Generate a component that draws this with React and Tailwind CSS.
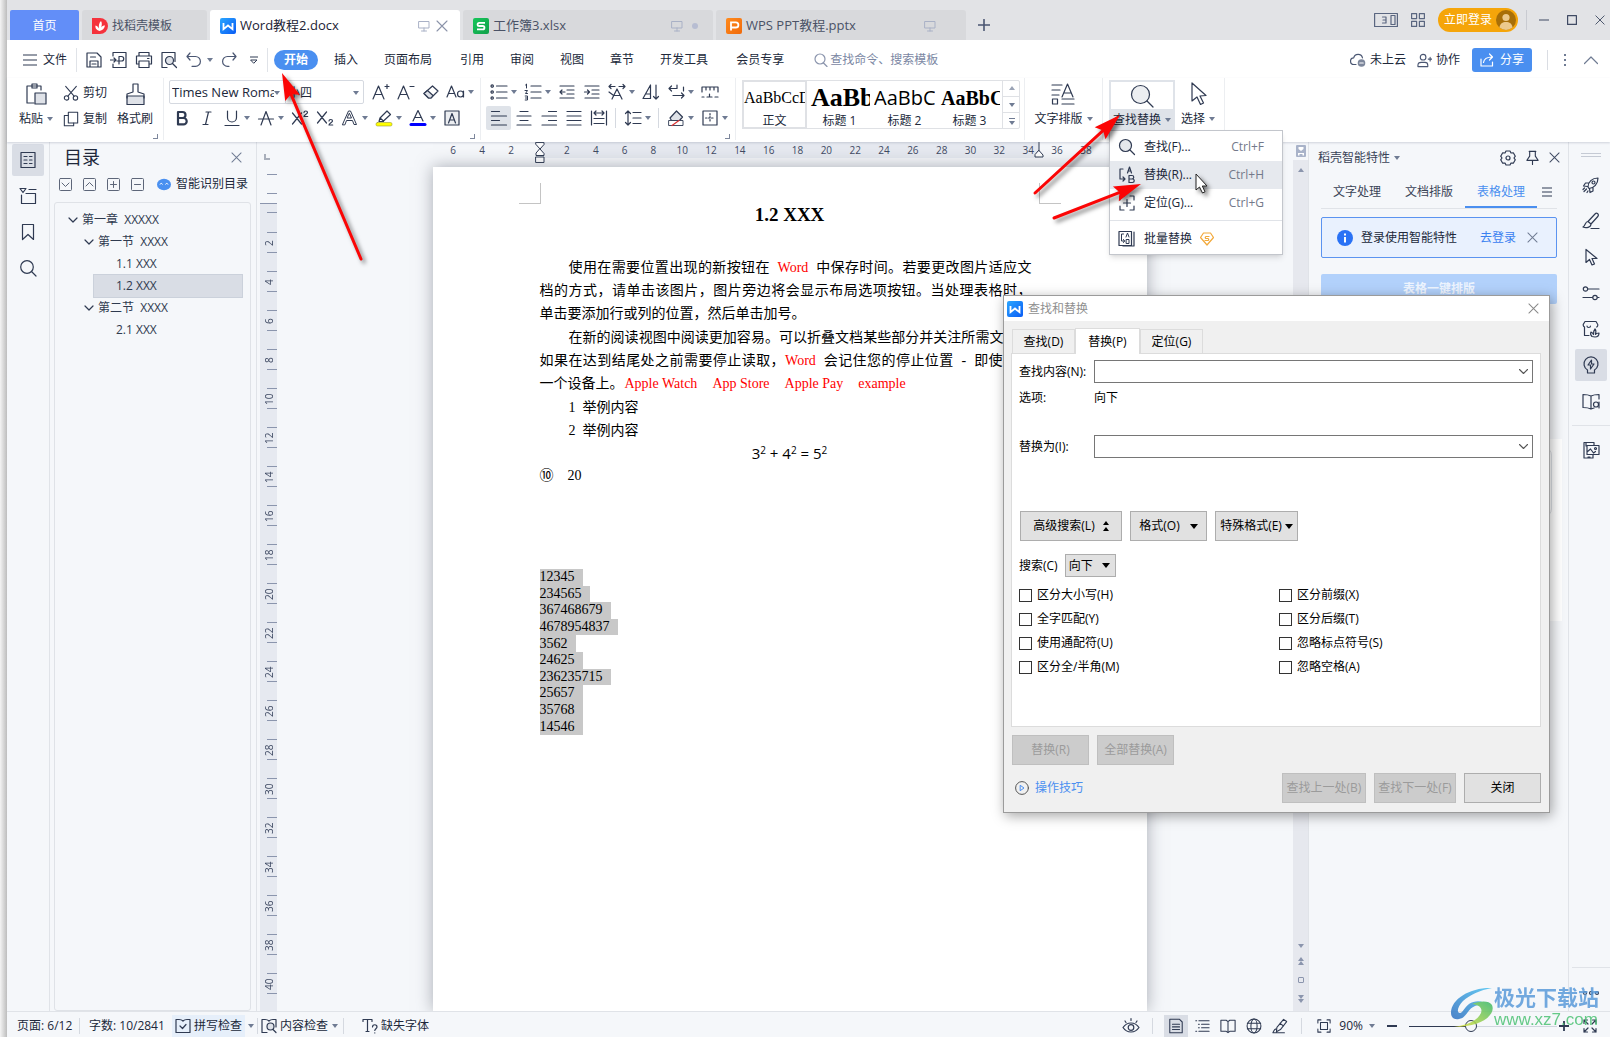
import React from "react";

const STROKE = "#2f3a52";

function Ic({ s = 18, box = 18, w = 1.2, c = STROKE, className = "", children }) {
  return (
    <svg
      width={s}
      height={s}
      viewBox={`0 0 ${box} ${box}`}
      fill="none"
      stroke={c}
      strokeWidth={w}
      strokeLinecap="round"
      strokeLinejoin="round"
      className={`shrink-0 ${className}`}
      aria-hidden="true"
    >
      {children}
    </svg>
  );
}

function Caret({ c = "#6f7b93", up = false }) {
  return (
    <svg width="6" height="4" viewBox="0 0 6 4" className="shrink-0" aria-hidden="true">
      <path d={up ? "M0 4h6L3 0z" : "M0 0h6L3 4z"} fill={c} />
    </svg>
  );
}

function Cross({ s = 12, c = "#6f7b93" }) {
  return (
    <Ic s={s} box={12} w={1.1} c={c}>
      <path d="M1 1l10 10M11 1L1 11" />
    </Ic>
  );
}

function AppLogo({ kind, id }) {
  const colors = {
    w: ["#2aa6ff", "#0a5cf5"],
    s: ["#17c65a", "#11a04a"],
    p: ["#ff8a1c", "#f06a0c"],
  }[kind];
  const d = {
    w: "M3.500 5v6.200L8 7.500l4.500 3.700V5",
    s: "M12 4.800H6.200a1.500 1.500 0 0 0 0 3.200h3.600a1.600 1.600 0 0 1 0 3.300H4",
    p: "M5 12.500V4.300h4.800a2.600 2.600 0 0 1 0 5.200H5",
  }[kind];
  return (
    <svg width="16" height="16" viewBox="0 0 16 16" className="shrink-0" aria-hidden="true">
      <defs>
        <linearGradient id={id} x1="0" y1="0" x2="1" y2="1">
          <stop offset="0" stopColor={colors[0]} />
          <stop offset="1" stopColor={colors[1]} />
        </linearGradient>
      </defs>
      <rect width="16" height="16" rx="2" fill={`url(#${id})`} />
      <path d={d} fill="none" stroke="#fff" strokeWidth="1.800" />
    </svg>
  );
}

function Monitor() {
  return (
    <Ic s={12} box={12} w={1} c="#a9b1c6">
      <path d="M1 1.500h10v6.500H1zM6 8v3M3.500 11h5" />
    </Ic>
  );
}

function FileTab({ kind, name, active, children }) {
  return (
    <div
      className={`flex h-[30px] w-[250px] items-center rounded-t-[3px] px-[10px] pt-[2px] text-[13px] ${
        active ? "bg-white text-[#1b2233]" : "bg-[#d8d9dc] text-[#4a5266]"
      }`}
    >
      <AppLogo kind={kind} id={`tab-${kind}`} />
      <span className="ml-1 flex-1 whitespace-nowrap">{name}</span>
      <Monitor />
      <span className="ml-1 flex w-4 justify-center">{children}</span>
    </div>
  );
}

function TitleBar() {
  return (
    <header className="flex h-10 shrink-0 items-end bg-[#e2e3e6] pl-[3px]">
      <nav className="flex items-end gap-[3px]">
        <button className="h-[30px] w-[69px] rounded-t-[2px] bg-[#628ef8] pt-[2px] text-xs text-white">首页</button>
        <div className="flex h-[30px] w-[125px] items-center rounded-t-[3px] bg-[#d8d9dc] pl-[10px] pt-[2px] text-xs text-[#4a5266]">
          <svg width="16" height="16" viewBox="0 0 16 16" aria-hidden="true">
            <path d="M0 0h8a8 8 0 0 1 0 16H0z" fill="#f5323c" />
            <path d="M7.500 13C4 12 3 9.500 3.500 7.500c2 .5 3 2 3.500 3C6.500 7.500 7 5 9 3c1.200 2 1 4.500 0 6.500 1-1.500 2.500-2 4-2-.5 3-2.500 5-5.500 5.500z" fill="#fff" />
          </svg>
          <span className="ml-1">找稻壳模板</span>
        </div>
        <FileTab kind="w" name="Word教程2.docx" active>
          <Cross c="#8b93a9" />
        </FileTab>
        <FileTab kind="s" name="工作簿3.xlsx">
          <span className="size-[6px] rounded-full bg-[#b7bdd2]" />
        </FileTab>
        <FileTab kind="p" name="WPS PPT教程.pptx" />
      </nav>
      <button aria-label="新建标签" className="flex h-[30px] w-9 items-center justify-center">
        <Ic s={12} box={12} w={1.6} c="#4a5672">
          <path d="M6 .5v11M.5 6h11" />
        </Ic>
      </button>
      <div className="flex-1" />
      <div className="flex h-10 items-center pr-[5px]">
        <Ic s={24} box={24} w={1.200} c="#5a6680">
          <path d="M.6 5.500h22.800v13H.6zM17 7.500h4v9h-4zM8.500 9h3.500v6H8.500M9 12h3" />
        </Ic>
        <Ic s={14} box={14} w={1.200} c="#5a6680" className="ml-[13px]">
          <path d="M.6.6h5v5h-5zM8.400.6h5v5h-5zM.6 8.400h5v5h-5zM8.400 8.400h5v5h-5z" />
        </Ic>
        <button className="ml-[13px] flex h-6 items-center gap-1 rounded-full bg-[#f5a50a] pl-[6px] pr-[2px] text-xs text-white">
          立即登录
          <svg width="20" height="20" viewBox="0 0 20 20" aria-hidden="true">
            <circle cx="10" cy="10" r="10" fill="#a86f08" />
            <circle cx="10" cy="7.500" r="3.600" fill="#ecc98c" />
            <path d="M3.500 17.500c.5-4 3-5.500 6.500-5.500s6 1.500 6.500 5.500a10 10 0 0 1-13 0z" fill="#ecc98c" />
          </svg>
        </button>
        <span className="ml-2 h-5 w-px bg-[#c9cbd1]" />
        <div className="ml-3 flex items-center gap-[18px]">
          <button aria-label="最小化">
            <Ic s={10} box={10} w={1.200} c="#3f4a63"><path d="M0 5h10" /></Ic>
          </button>
          <button aria-label="最大化">
            <Ic s={10} box={10} w={1.200} c="#3f4a63"><path d="M.6.6h8.800v8.800H.6z" /></Ic>
          </button>
          <button aria-label="关闭窗口"><Cross s={10} c="#3f4a63" /></button>
        </div>
      </div>
    </header>
  );
}

function MenuRow() {
  const tabs = ["插入", "页面布局", "引用", "审阅", "视图", "章节", "开发工具", "会员专享"];
  return (
    <div className="flex h-[38px] shrink-0 items-center bg-white pl-4 pt-[2px] text-xs text-[#20283a]">
      <button className="flex items-center gap-[6px]">
        <Ic s={14} box={14}><path d="M0 2h14M0 7h14M0 12h14" /></Ic>
        文件
      </button>
      <span className="ml-[9px] h-6 w-px bg-[#e0e3e8]" />
      <div className="ml-2 flex items-center gap-[7px]">
        <button aria-label="保存">
          <Ic><path d="M2 2h10l4 4v10H2zM5 16v-6h8v6M5.500 6h5M7 13h4" /></Ic>
        </button>
        <button aria-label="输出为PDF">
          <Ic><path d="M3 5V1.500h13v15H3V13M0 9h6M4 7l2 2-2 2M9 13V5.500h2.500a2 2 0 0 1 0 4.500H7" /></Ic>
        </button>
        <button aria-label="打印">
          <Ic><path d="M4 5V1.500h10V5M4 13H1.500V5h15v8H14M4 10h10v6.500H4zM12.500 7.500h1.500" /></Ic>
        </button>
        <button aria-label="打印预览">
          <Ic>
            <path d="M7 16.500H2v-15h13v9" />
            <circle cx="9.500" cy="9.500" r="4" fill="#dfe2e8" />
            <path d="M12.500 12.500l4 4" />
          </Ic>
        </button>
        <button aria-label="撤销" className="flex items-center gap-1">
          <Ic c="#4a5672"><path d="M5 2L2 5.500 5 9M2 5.500h8.500a4.800 4.800 0 0 1 0 9.800H7" /></Ic>
          <Caret />
        </button>
        <button aria-label="恢复">
          <Ic c="#4a5672"><path d="M13 2l3 3.500L13 9M16 5.500H7.500a4.800 4.800 0 0 0 0 9.800H9" /></Ic>
        </button>
        <button aria-label="自定义快速访问" className="flex w-[18px] justify-center">
          <Ic s={8} box={8} w={1}><path d="M0 1h8M1 4h6L4 7z" /></Ic>
        </button>
      </div>
      <span className="ml-1 h-6 w-px bg-[#e0e3e8]" />
      <button className="ml-[6px] h-5 w-11 rounded-full bg-[#4a8ff0] font-bold text-white">开始</button>
      <nav className="ml-4 flex gap-[26px]">
        {tabs.map((t) => (
          <button key={t} className={t.length > 2 ? "mr-[2px]" : ""}>{t}</button>
        ))}
      </nav>
      <label className="ml-7 flex items-center gap-[2px] text-[#7b87a3]">
        <Ic s={14} box={14} c="#8b95ad"><circle cx="6" cy="6" r="5" /><path d="M9.500 10l3.500 3.500" /></Ic>
        <input
          aria-label="查找命令、搜索模板"
          placeholder="查找命令、搜索模板"
          className="w-[130px] bg-transparent outline-none placeholder:text-[#7b87a3]"
        />
      </label>
      <div className="flex-1" />
      <div className="flex items-center pr-3">
        <button className="flex items-center gap-1">
          <Ic s={16} box={16} c="#4a5672">
            <path d="M6 12.500H4a3.300 3.300 0 0 1-.3-6.600A4.500 4.500 0 0 1 12.500 6" />
            <circle cx="11.500" cy="11" r="3.800" fill="#7d879c" stroke="none" />
            <path d="M9.800 11h3.400" stroke="#fff" />
          </Ic>
          未上云
        </button>
        <button className="ml-[11px] flex items-center gap-1">
          <Ic s={15} box={16} c="#4a5672">
            <circle cx="6.500" cy="4.500" r="3" />
            <path d="M1 14.500v-1.500c0-2 1.500-3 3.500-3h4c1.500 0 3 1 3 3v1.500zM12 6.500h4M14 4.500v4" />
          </Ic>
          协作
        </button>
        <button className="ml-3 flex h-6 w-[60px] items-center justify-center gap-[6px] rounded-[3px] bg-[#4a8ff0] text-white">
          <Ic s={14} box={14} c="#fff"><path d="M1 6v7h11.500V9M3.500 9.500C4 6 7 4 12 4M9.500 1L12.500 4 9.500 7" /></Ic>
          分享
        </button>
        <span className="ml-[15px] h-5 w-px bg-[#dadde3]" />
        <button aria-label="更多" className="ml-4 flex flex-col gap-[3px]">
          <i className="size-[2px] bg-[#6f7b93]" />
          <i className="size-[2px] bg-[#6f7b93]" />
          <i className="size-[2px] bg-[#6f7b93]" />
        </button>
        <button aria-label="折叠功能区" className="ml-[18px]">
          <Ic s={14} box={14} c="#6f7b93"><path d="M.5 10.500L7 4l6.500 6.500" /></Ic>
        </button>
      </div>
    </div>
  );
}

function Tool({ label, drop, active, children }) {
  return (
    <button
      aria-label={label}
      className={`flex h-6 items-center ${drop ? "w-[34px]" : "w-[25px] justify-center"} ${
        active ? "rounded-[2px] bg-[#dfe3e9]" : ""
      }`}
    >
      {drop ? (
        <>
          <span className="flex w-[25px] justify-center">{children}</span>
          <Caret />
        </>
      ) : (
        children
      )}
    </button>
  );
}

function Group({ className = "", corner, children }) {
  return (
    <section className={`relative h-[62px] shrink-0 border-r border-[#eceef1] pt-[2px] ${className}`}>
      {children}
      {corner && (
        <span className="absolute bottom-[1px] right-[5px] size-[5px] border-b border-r border-[#7d879c]" />
      )}
    </section>
  );
}

function FontGroup() {
  return (
    <Group className="flex w-[317px] flex-col gap-[2px] pl-[5px]" corner>
      <div className="flex h-6 items-center gap-1">
        <div className="flex h-6 w-[195px] rounded-[2px] border border-[#d5d9e0] pt-[2px] text-[13px] text-[#20283a]">
          <div className="flex w-[116px] items-center border-r border-[#d5d9e0] pl-[2px] pr-1">
            <select aria-label="字体" defaultValue="t" className="w-[102px] appearance-none overflow-hidden bg-transparent outline-none">
              <option value="t">Times New Roman</option>
            </select>
            <Caret />
          </div>
          <div className="flex flex-1 items-center pl-[2px] pr-1 text-xs">
            <select aria-label="字号" defaultValue="x" className="flex-1 appearance-none bg-transparent outline-none">
              <option value="x">小四</option>
            </select>
            <Caret />
          </div>
        </div>
        <div className="flex">
          <Tool label="增大字号"><Ic><path d="M1 16L6.500 3 12 16M3 11.500h7M13 3.500h4M15 1.500v4" /></Ic></Tool>
          <Tool label="减小字号"><Ic><path d="M1 16L6.500 3 12 16M3 11.500h7M13 3.500h4" /></Ic></Tool>
          <Tool label="清除格式">
            <Ic><path d="M10.500 3l5.500 5-7 7H6.500L2 10.500z" /><path d="M5.500 7.500l5.500 5-2 2.500H6.500L2 10.500z" fill="#dfe2e8" /></Ic>
          </Tool>
          <Tool label="更改大小写" drop>
            <Ic s={20} box={20}><path d="M1 15L5.500 4 10 15M2.500 11.500h6" /><circle cx="14.500" cy="12" r="3" /><path d="M17.500 9v6" /></Ic>
          </Tool>
        </div>
      </div>
      <div className="flex">
        <Tool label="加粗"><Ic w={2.200}><path d="M5 3h4.500a3 3 0 0 1 0 6H5zM5 9h5.500a3.200 3.200 0 0 1 0 6.400H5z" /></Ic></Tool>
        <Tool label="倾斜"><Ic><path d="M8 3h5M5 15.500h5M10.500 3L7.500 15.500" /></Ic></Tool>
        <Tool label="下划线" drop><Ic><path d="M4.500 2v6.500a4.500 4.500 0 0 0 9 0V2M2 16.500h14" /></Ic></Tool>
        <Tool label="删除线" drop><Ic><path d="M4 16L9 2.500 14 16M1.500 10h15" /></Ic></Tool>
        <Tool label="上标"><Ic><path d="M1.500 4l9 11M10.500 4l-9 11M13 3.500c0-2 3.500-2 3.500 0 0 1.500-3.500 2-3.500 4h3.700" /></Ic></Tool>
        <Tool label="下标"><Ic><path d="M1.500 3l9 11M10.500 3l-9 11M13 12c0-2 3.500-2 3.500 0 0 1.500-3.500 2-3.500 4h3.700" /></Ic></Tool>
        <Tool label="文字效果" drop>
          <Ic w={1}><path d="M1.500 15.500L7.500 2h2L15.500 15.500H13l-1.500-4h-6l-1.500 4zM6.500 9h4L8.500 4.500z" /></Ic>
        </Tool>
        <Tool label="突出显示" drop>
          <Ic>
            <path d="M5 9l7-7 3.500 3.500-7 6.500zM5 9l-1 3.500h4.500" fill="#fff" />
            <rect x="1" y="13.500" width="16" height="3.500" rx="1.500" fill="#ffff00" stroke="#9a9a3a" strokeWidth=".6" />
          </Ic>
        </Tool>
        <Tool label="字体颜色" drop>
          <Ic><path d="M4 12L9 1.500 14 12M6 8.500h6" /><path d="M2 15.500h14" stroke="#0000ff" strokeWidth="3" /></Ic>
        </Tool>
        <Tool label="字符底纹">
          <Ic><path d="M2 2h14v14H2z" fill="#eceef1" /><path d="M5.500 14L9 4.500l3.500 9.500M6.500 11h5" /></Ic>
        </Tool>
      </div>
    </Group>
  );
}

function ParagraphGroup() {
  return (
    <Group className="flex w-[255px] flex-col gap-[2px] pl-[5px]" corner>
      <div className="flex">
        <Tool label="项目符号" drop>
          <Ic><path d="M6.500 3H17M6.500 9H17M6.500 15H17" /><circle cx="2.200" cy="3" r="1.200" /><circle cx="2.200" cy="9" r="1.200" /><circle cx="2.200" cy="15" r="1.200" /></Ic>
        </Tool>
        <Tool label="编号" drop>
          <Ic><path d="M7 3H17M7 9H17M7 15H17" /><path d="M1.500 2l1-1v4M1 7.500h2.500L1.500 10.500h2M1.200 13h2.300v4H1.200M1.500 15h2" strokeWidth="1" /></Ic>
        </Tool>
        <Tool label="减少缩进"><Ic><path d="M2 3h14M9 7h7M9 11h7M2 15h14M2 9h5M4 7L2 9l2 2" /></Ic></Tool>
        <Tool label="增加缩进"><Ic><path d="M2 3h14M9 7h7M9 11h7M2 15h14M1.500 9h5M4.500 7l2 2-2 2" /></Ic></Tool>
        <Tool label="中文版式" drop><Ic><path d="M4 16l5-10 5 10M6 12.500h6M1 3.500h6M3 1.500l-2 2 2 2M11 3.500h6M15 1.500l2 2-2 2M1 9l4 3" /></Ic></Tool>
        <Tool label="排序"><Ic><path d="M1 15.500L8.500 2v13.500zM3.500 11h5M14 2v14M11.500 13.500L14 16l2.500-2.500" /></Ic></Tool>
        <Tool label="显示编辑标记" drop><Ic><path d="M2 5.500h8V2M4.500 3L2 5.500 4.500 8M6 12.500h11M14.500 10l2.500 2.500-2.500 2.500M16.500 4v4" /></Ic></Tool>
        <Tool label="制表位"><Ic><path d="M1 4h16v5M1 4v5M5 4v3M9 4v3M13 4v3M1 14h2M6 14h5M8.500 11v3M14 14h3" /></Ic></Tool>
      </div>
      <div className="flex items-center">
        <Tool label="左对齐" active><Ic><path d="M1.500 2.500h8M1.500 7h15M1.500 11.500h8M1.500 16h15" /></Ic></Tool>
        <Tool label="居中对齐"><Ic><path d="M5 2.500h8M2 7h14M5 11.500h8M2 16h14" /></Ic></Tool>
        <Tool label="右对齐"><Ic><path d="M8.500 2.500h8M2 7h14.500M8.500 11.500h8M2 16h14.500" /></Ic></Tool>
        <Tool label="两端对齐"><Ic><path d="M2 2.500h14M2 7h14M2 11.500h14M2 16h14" /></Ic></Tool>
        <Tool label="分散对齐"><Ic><path d="M1.500 2v14M16.500 2v14M4 4h10M6 2L4 4l2 2M12 2l2 2-2 2M4 9.500h10M4 14.500h10" /></Ic></Tool>
        <span className="mx-1 h-5 w-px bg-[#d5d9e0]" />
        <Tool label="行距" drop><Ic><path d="M4 2v14M1.500 4.500L4 2l2.500 2.500M1.500 13.500L4 16l2.500-2.500M9 3.500h8M9 9h8M9 14.500h8" /></Ic></Tool>
        <span className="mx-1 h-5 w-px bg-[#d5d9e0]" />
        <Tool label="底纹颜色" drop>
          <Ic><path d="M9.500 2l6 6-3 3.500H4.500L3 9z" fill="#dfe2e8" /><path d="M2 11.500h14v5H2z" fill="#fff" strokeWidth=".9" /><path d="M5 16.500l7-5" stroke="#d33" /></Ic>
        </Tool>
        <Tool label="边框" drop><Ic><path d="M2 2h14v14H2z" /><path d="M9 4.500v9M4.500 9h9" strokeDasharray="1.500 1.500" /></Ic></Tool>
      </div>
    </Group>
  );
}

function StyleTile({ sample, label, active, sampleClass }) {
  return (
    <button
      className={`flex h-[49px] w-[65px] flex-col items-center overflow-hidden border-2 ${
        active ? "border-[#dfe1e5]" : "border-transparent"
      }`}
    >
      <span className={`flex h-8 w-full items-center overflow-hidden whitespace-nowrap leading-8 text-black ${sampleClass}`}>{sample}</span>
      <span className="text-xs leading-[13px] text-[#20283a]">{label}</span>
    </button>
  );
}

function FindMenuItem({ icon, label, keys, active }) {
  return (
    <button
      role="menuitem"
      className={`flex h-7 w-full items-center pl-[8px] pr-[18px] text-[#20283a] ${active ? "bg-[#e6e9ee]" : ""}`}
    >
      {icon}
      <span className="ml-2 flex items-center gap-2">{label}</span>
      <span className="ml-auto text-[#73798a]">{keys}</span>
    </button>
  );
}

const ReplaceGlyph = () => <path d="M5 3H2v10h5M5 11l2 2-2 2M9.500 7l2-6 2 6M10 5h3M11 9.500h3a1.700 1.700 0 0 1 0 3.500h-3zM11 13h3.500a1.700 1.700 0 0 1 0 3.500H11z" />;

function FindMenu() {
  return (
    <div role="menu" className="absolute left-0 top-[50px] z-30 w-[174px] border border-[#c3c6cc] bg-white pb-px pt-[2px] text-xs shadow-md">
      <FindMenuItem
        label="查找(F)..."
        keys="Ctrl+F"
        icon={<Ic><circle cx="7.500" cy="7.500" r="6" fill="#e6e8ec" /><path d="M12 12l4.500 4.500" /></Ic>}
      />
      <FindMenuItem active label="替换(R)..." keys="Ctrl+H" icon={<Ic><ReplaceGlyph /></Ic>} />
      <FindMenuItem
        label="定位(G)..."
        keys="Ctrl+G"
        icon={<Ic><path d="M2 6V2h4M12 2h4v4M16 12v4h-4M6 16H2v-4M9 5.500v7M5.500 9h7" /></Ic>}
      />
      <div className="mb-1 mt-[3px] h-px bg-[#e0e3e8]" />
      <FindMenuItem
        icon={<Ic><path d="M1 1.500h12.500v14H1zM16 2v14H5" /><path d="M5.500 4H3.500v7h3M5.500 9.500l1 1.500-1 1.500M8 7l1.500-4L11 7M8.500 9.500H11v4H8.500z" strokeWidth="1" /></Ic>}
        label={
          <>
            批量替换
            <Ic s={14} box={14} c="#f2a93b"><path d="M3.500 1h7L13.500 5.500 7 13 .5 5.500z" /><path d="M9 4.500H6c-1 0-1 2 0 2h2c1 0 1 2 0 2H5" /></Ic>
          </>
        }
      />
    </div>
  );
}

function Ribbon() {
  return (
    <div className="relative z-20 flex h-16 shrink-0 bg-white text-xs text-[#20283a] shadow-[0_1px_2px_rgba(120,130,150,0.3)]">
      <Group className="flex w-[157px] pl-[11px]" corner>
        <button className="flex w-[36px] flex-col items-center pt-[2px]">
          <Ic s={24} box={24} className="mb-[5px]">
            <path d="M17 8V4H3v17h7M8 2h5v4H8z" />
            <path d="M11 11h11v11H11z" fill="#dfe2e8" />
          </Ic>
          <span className="flex items-center gap-1">粘贴 <Caret /></span>
        </button>
        <div className="ml-[9px] flex flex-col gap-[2px] pt-px">
          <button className="flex h-6 items-center gap-1">
            <Ic s={16} box={18}><circle cx="4" cy="14.500" r="2.500" /><circle cx="14" cy="14.500" r="2.500" /><path d="M3 1.500l9.500 11M15 1.500L5.500 12.500" /></Ic>
            剪切
          </button>
          <button className="flex h-6 items-center gap-1">
            <Ic s={16} box={18}><path d="M6 1.500h10.500v12H6z" /><path d="M6 5H1.500v11.500H12v-3" /></Ic>
            复制
          </button>
        </div>
        <button className="ml-[10px] flex flex-col items-center pt-[2px]">
          <Ic s={24} box={24} className="mb-[5px]">
            <path d="M4 14h17v8.500H4z" fill="#dfe2e8" />
            <path d="M4 16v-4l6-2V2h5v8l6 2v4" />
          </Ic>
          格式刷
        </button>
      </Group>
      <FontGroup />
      <ParagraphGroup />
      <Group className="w-[289px] pl-[6px]">
        <div className="flex h-[49px] w-[278px] rounded-[2px] outline outline-1 -outline-offset-1 outline-[#dfe1e5]">
          <StyleTile active sample="AaBbCcD" label="正文" sampleClass="font-['Liberation_Serif'] text-base" />
          <StyleTile sample="AaBb" label="标题 1" sampleClass="font-['Liberation_Serif'] text-[26px] font-bold pl-[2px]" />
          <StyleTile sample="AaBbC" label="标题 2" sampleClass="font-['Open_Sans'] text-[20px]" />
          <StyleTile sample="AaBbC" label="标题 3" sampleClass="font-['Liberation_Serif'] text-[20px] font-bold pl-[2px]" />
          <div className="flex flex-1 flex-col divide-y divide-[#dfe1e5] border-l border-[#dfe1e5]">
            <button aria-label="上一行" className="flex flex-1 items-center justify-center"><Caret up c="#9aa3b5" /></button>
            <button aria-label="下一行" className="flex flex-1 items-center justify-center"><Caret /></button>
            <button aria-label="更多样式" className="flex flex-1 flex-col items-center justify-center gap-[2px]"><i className="h-px w-[6px] bg-[#6f7b93]" /><Caret /></button>
          </div>
        </div>
      </Group>
      <Group className="flex w-[78px] justify-center">
        <button className="flex flex-col items-center pt-[2px]">
          <Ic s={24} box={24} className="mb-[5px]"><path d="M1 3h10M1 8h8M1 13h7M11 15L16.500 2 22 15M13 11h7M1.500 17h5v5h-5zM11 17h12M11 22h12" /></Ic>
          <span className="flex items-center gap-1">文字排版 <Caret /></span>
        </button>
      </Group>
      <Group className="flex w-[122px] pl-[6px]">
        <div className="relative">
          <button className="flex h-[50px] w-[66px] flex-col items-center border-2 border-[#dfe3e9] bg-[#dfe3e9]" aria-haspopup="menu" aria-expanded="true">
            <span className="flex h-[27px] w-full shrink-0 items-center justify-center bg-white">
              <Ic s={24} box={24}><circle cx="10.500" cy="10.500" r="9" fill="#eceef1" /><path d="M17 17l6 6" /></Ic>
            </span>
            <span className="flex items-center gap-1 pt-[3px]">查找替换 <Caret /></span>
          </button>
          <FindMenu />
        </div>
        <button className="ml-[6px] flex flex-col items-center pt-[2px]">
          <Ic s={24} box={24} className="mb-[5px]"><path d="M6 1v18l5-4 3.500 7.500 3-1.500-3.500-7 6-.5z" /></Ic>
          <span className="flex items-center gap-1">选择 <Caret /></span>
        </button>
      </Group>
    </div>
  );
}

function NavRail() {
  return (
    <nav className="flex w-[43px] shrink-0 flex-col items-center gap-1 border-r border-[#e0e3e8] pt-[2px]">
      <button aria-label="目录" className="flex size-8 items-center justify-center rounded-[2px] bg-[#d9dde5]">
        <Ic><path d="M2 1.500h14v15H2zM5 5.500h3M5 9h3M5 12.500h3M10.500 5.500H13M10.500 9H13M10.500 12.500H13" /></Ic>
      </button>
      <button aria-label="章节" className="flex size-8 items-center justify-center">
        <Ic><path d="M1 1.500h6L4 5.500zM10 2.500h7M2.500 8v8.500h14V6.500H7" /></Ic>
      </button>
      <button aria-label="书签" className="flex size-8 items-center justify-center">
        <Ic><path d="M3.500 1.500h11v15L9 11.500l-5.500 5z" /></Ic>
      </button>
      <button aria-label="查找" className="flex size-8 items-center justify-center">
        <Ic><circle cx="8" cy="8" r="6.300" /><path d="M12.500 12.500l4.500 4.500" /></Ic>
      </button>
    </nav>
  );
}

function TocRow({ level, label, open, selected }) {
  const pad = ["pl-[13px]", "pl-[29px]", "pl-[22px]"][level];
  return (
    <li className={`${level === 2 ? "pl-[39px] pr-[8px]" : ""}`}>
      <button
        className={`flex h-[22px] w-full items-center gap-1 whitespace-pre ${pad} ${
          selected ? "bg-[#d9dde5] outline outline-1 outline-[#cbd1db]" : ""
        }`}
      >
        {open && <Ic s={10} box={10}><path d="M1 3l4 4 4-4" /></Ic>}
        {label}
      </button>
    </li>
  );
}

function Toc() {
  const tools = ["M3 5l3.500 3.500L10 5", "M3 8l3.500-3.500L10 8", "M3.500 6.500h6M6.500 3.500v6", "M3.500 6.500h6"];
  const names = ["展开", "收起", "增加级别", "减少级别"];
  return (
    <aside className="flex w-[207px] shrink-0 flex-col border-r border-[#e0e3e8] text-xs text-[#2f3a4f]">
      <div className="flex h-[30px] items-center justify-between px-[14px]">
        <h2 className="text-lg leading-6 text-[#20283a]">目录</h2>
        <button aria-label="关闭目录"><Cross s={11} /></button>
      </div>
      <div className="flex h-6 items-center gap-[11px] pl-[9px]">
        {tools.map((d, i) => (
          <button key={d + i} aria-label={names[i]}>
            <Ic s={13} box={13} w={1} c="#5d6679"><rect x=".5" y=".5" width="12" height="12" rx="1" /><path d={d} /></Ic>
          </button>
        ))}
        <button className="ml-[2px] flex items-center gap-[5px] text-[#20283a]">
          <svg width="14" height="13" viewBox="0 0 14 13" aria-hidden="true">
            <ellipse cx="7" cy="6.500" rx="7" ry="5.800" fill="#4a90f0" />
            <path d="M3 6.500c.5-1.500 2-1.500 2.500 0M8.500 6.500c.5-1.500 2-1.500 2.500 0" stroke="#fff" fill="none" />
          </svg>
          智能识别目录
        </button>
      </div>
      <ul className="ml-1 mr-[5px] mt-[6px] flex-1 rounded-[3px] border border-[#dfe2e7] pt-[6px]">
        <TocRow level={0} open label="第一章  XXXXX" />
        <TocRow level={1} open label="第一节  XXXX" />
        <TocRow level={2} label="1.1 XXX" />
        <TocRow level={2} selected label="1.2 XXX" />
        <TocRow level={1} open label="第二节  XXXX" />
        <TocRow level={2} label="2.1 XXX" />
      </ul>
    </aside>
  );
}

function VerticalRuler() {
  const marks = Array.from({ length: 21 }, (_, i) => (i + 1) * 2);
  return (
    <div className="flex w-[20px] shrink-0 flex-col overflow-hidden pl-[3px] text-[#3f4a63]">
      <div className="flex h-[61px] shrink-0 flex-col items-end">
        <span className="mr-[7px] mt-3 size-[6px] border-b-2 border-l-2 border-[#a9afbb]" />
        <span className="mt-[14px] h-px w-[10px] bg-[#8b95ad]" />
        <span className="mt-[18px] h-px w-[10px] bg-[#8b95ad]" />
      </div>
      <div className="flex flex-1 flex-col items-end overflow-hidden border-t border-[#8b95ad] bg-[#e6e9f0] pt-[8px]">
        <span className="h-5 w-[10px] shrink-0 border-t border-[#8b95ad]" />
        {marks.map((n) => (
          <div key={n} className="flex h-[39px] w-[17px] shrink-0 flex-col items-end">
            <div className="flex h-5 w-full shrink-0 flex-col items-end">
              <span className="h-px w-[10px] shrink-0 bg-[#8b95ad]" />
              <span className="flex w-full flex-1 rotate-180 items-center justify-center pb-px text-[10px] leading-none [writing-mode:vertical-rl]">{n}</span>
            </div>
            <span className="h-px w-[10px] bg-[#8b95ad]" />
          </div>
        ))}
      </div>
    </div>
  );
}

function RulerCells({ from, to, className = "" }) {
  const n = Math.abs(to - from) / 2 + 1;
  const step = to > from ? 2 : -2;
  return (
    <div className={`flex ${className}`}>
      {Array.from({ length: n }, (_, i) => (
        <span key={i} className="flex-1 text-center">{from + i * step}</span>
      ))}
    </div>
  );
}

function HorizontalRuler() {
  return (
    <div className="flex h-[25px] shrink-0 text-[10px] leading-4 text-[#3f4a63]">
      <div className="flex w-[107px] justify-end pr-[14px]">
        <RulerCells from={6} to={2} className="w-[87px]" />
      </div>
      <div className="relative h-4 w-[499px] bg-[#e6e9f0]">
        <RulerCells from={2} to={34} className="ml-[13px] w-[490px]" />
        <Ic s={22} box={22} w={1} className="absolute -left-[11px] top-0">
          <path d="M7 .5h8v2L11 7 7 2.500zM11 7l4 4.500v2H7v-2zM7 15h8v5.500H7z" fill="#fff" />
        </Ic>
        <Ic s={16} box={16} w={1} className="absolute -right-[8px] top-0">
          <path d="M8 0v9M8 8.500l4 4.500v2H4v-2z" fill="#fff" />
        </Ic>
      </div>
      <RulerCells from={36} to={38} className="ml-[4px] w-[58px]" />
    </div>
  );
}

function Line({ indent, fill = true, children }) {
  return (
    <span
      className={`block h-[23px] whitespace-nowrap ${fill ? "[text-align-last:justify]" : ""} ${
        indent ? "ml-[29px]" : ""
      }`}
    >
      {children}
    </span>
  );
}

const Red = ({ children }) => <span className="text-[#ff0000]">{children}</span>;

function Page() {
  const numbers = ["12345", "234565", "367468679", "4678954837", "3562", "24625", "236235715", "25657", "35768", "14546"];
  return (
    <article className="relative flex-1 bg-white px-[107px] pt-[36px] font-['Liberation_Serif','Noto_Sans_CJK_SC',serif] text-sm leading-[23px] text-black shadow-[0_0_16px_rgba(90,95,110,0.5)]">
      <span className="absolute left-[86px] top-[16px] h-[21px] w-[22px] border-b border-r border-[#c4c4c4]" />
      <span className="absolute right-[86px] top-[16px] h-[21px] w-[22px] border-b border-l border-[#c4c4c4]" />
      <h1 className="text-center text-[19px] font-bold leading-[23px]">1.2 XXX</h1>
      <div className="mt-[30px] w-[492px]">
        <p className="mb-px">
          <Line indent>使用在需要位置出现的新按钮在 <Red>&nbsp;Word&nbsp;</Red> 中保存时间。若要更改图片适应文</Line>
          <Line>档的方式，请单击该图片，图片旁边将会显示布局选项按钮。当处理表格时，</Line>
          <Line fill={false}>单击要添加行或列的位置，然后单击加号。</Line>
        </p>
        <p className="mb-px">
          <Line indent>在新的阅读视图中阅读更加容易。可以折叠文档某些部分并关注所需文本。</Line>
          <Line>如果在达到结尾处之前需要停止读取，<Red>Word</Red>&nbsp; 会记住您的停止位置 &nbsp;- &nbsp;即使在另</Line>
          <Line fill={false}>
            <span className="flex">
              一个设备上。
              <Red>
                <span className="ml-px flex gap-[15px]">
                  <span>Apple Watch</span>
                  <span>App Store</span>
                  <span>Apple Pay</span>
                  <span>example</span>
                </span>
              </Red>
            </span>
          </Line>
        </p>
        <ol className="ml-[29px]">
          <li>1&nbsp; 举例内容</li>
          <li>2&nbsp; 举例内容</li>
        </ol>
      </div>
      <p className="h-[22px] text-center font-['Open_Sans'] text-[15px] leading-[22px]">
        3<sup className="text-[10px]">2</sup> + 4<sup className="text-[10px]">2</sup> = 5<sup className="text-[10px]">2</sup>
      </p>
      <p className="flex h-[23px] gap-[14px]">
        <span>⑩</span>
        <span>20</span>
      </p>
      <ul className="mt-[82px] flex h-[166px] flex-col items-start">
        {numbers.map((n) => (
          <li key={n} className="flex flex-1 items-center bg-[#c8c8c8] pr-2 leading-4">{n}</li>
        ))}
      </ul>
    </article>
  );
}

function ScrollBar() {
  return (
    <div className="flex w-[15px] shrink-0 flex-col items-center gap-2 bg-[#e6e8ee] pb-2">
      <button aria-label="显示标尺" className="flex h-[18px] w-full items-center justify-center bg-[#f5f7fa]">
        <svg width="10" height="12" viewBox="0 0 10 12" aria-hidden="true">
          <rect width="10" height="12" rx="1" fill="#a9b3c9" />
          <path d="M2.500 2h5v2L5 6 2.500 4zM2 8h6v2.500H6.500V9h-3v1.500H2z" fill="#fff" />
        </svg>
      </button>
      <button aria-label="向上滚动"><Caret up c="#8b95ad" /></button>
      <div className="flex-1" />
      <button aria-label="向下滚动" className="mb-px"><Caret c="#8b95ad" /></button>
      <button aria-label="上一页" className="mb-1"><Caret up c="#8b95ad" /><Caret up c="#8b95ad" /></button>
      <button aria-label="选择浏览对象" className="mb-1 size-[6px] rounded-[1px] border border-[#8b95ad]" />
      <button aria-label="下一页"><Caret c="#8b95ad" /><Caret c="#8b95ad" /></button>
    </div>
  );
}

function SmartPanel() {
  return (
    <aside className="flex w-[261px] shrink-0 flex-col border-x border-[#e0e3e8] pl-3 pr-[11px] text-xs text-[#3a4357]">
      <div className="-ml-[3px] flex h-[31px] items-center justify-between">
        <button className="flex items-center gap-1">稻壳智能特性 <Caret /></button>
        <div className="-mr-[3px] flex items-center gap-[9px]">
          <button aria-label="设置">
            <Ic s={16} box={16}><path d="M6 1h4l1 2 2.300-.2 2 3.400L14 8l1.300 1.800-2 3.400L11 13l-1 2H6l-1-2-2.300.2-2-3.400L2 8 .7 6.200l2-3.400L5 3z" /><circle cx="8" cy="8" r="2" /></Ic>
          </button>
          <button aria-label="固定">
            <Ic s={15} box={16}><path d="M4.500 1.500h7M5 1.500v5L2 11h12l-3-4.500v-5M8 11v4.500" /></Ic>
          </button>
          <button aria-label="关闭面板"><Cross s={11} c="#3f4a63" /></button>
        </div>
      </div>
      <div className="flex h-9 items-center border-b border-[#e0e3e8] pr-[4px]" role="tablist">
        <button role="tab" className="h-full w-[72px] pt-[2px]">文字处理</button>
        <button role="tab" className="h-full w-[72px] pt-[2px]">文档排版</button>
        <button role="tab" aria-selected="true" className="h-full w-[72px] border-b-2 border-[#4a8ff0] pt-1 text-[#4a8ff0]">表格处理</button>
        <button aria-label="更多功能" className="ml-[5px] pt-[2px]"><Ic s={10} box={10}><path d="M0 1h10M0 5h10M0 9h10" /></Ic></button>
      </div>
      <div className="mt-2 flex h-[41px] items-center rounded-[2px] border border-[#5b93f0] bg-[#e9f1fe] pl-[15px] pr-[18px]">
        <svg width="16" height="16" viewBox="0 0 16 16" aria-hidden="true">
          <circle cx="8" cy="8" r="8" fill="#2a72f5" />
          <path d="M8 3.500v2M8 7v5.500" stroke="#fff" strokeWidth="2" />
        </svg>
        <span className="ml-2 text-[#20283a]">登录使用智能特性</span>
        <a href="#login" className="ml-auto text-[#3a80f0]">去登录</a>
        <button aria-label="关闭提示" className="ml-[11px]"><Cross s={11} /></button>
      </div>
      <button className="mt-4 h-[30px] rounded-[2px] bg-[#b2d1fb] font-bold text-[#eef5ff]">表格一键排版</button>
      <div className="-mr-[5px] mt-[135px] h-[182px] bg-white pr-[10px] pt-2">
        <div className="h-[70px] rounded-[8px] border border-[#e0e3e8]" />
      </div>
    </aside>
  );
}

function ToolRail() {
  const items = [
    ["快捷工具", <path d="M6 11c0-5 4-9 10-9 0 6-4 10-9 10.500zM6.500 7H3.500L1.500 10l4 .5M11 12v3l-3 1.500-.5-4M4.500 13L2 15.500M2.500 12L1 13.500M6 15l-1 1.500" />, <circle cx="11.500" cy="6.500" r="1.500" />],
    ["编辑", <path d="M15.500 1.500c1 .8 1 2 .3 3L9 12 6 9.500 13 2c.8-.8 1.700-1 2.500-.5zM6 9.500c-3 0-2.500 4-5 5.500 3 1.500 8 .5 8-3M9 16.500h8" />],
    ["选择", <path d="M4 1.500v13l3.500-3 2.500 5.500 2.500-1-2.500-5.500H15z" />],
    ["属性", <path d="M6 5h11M1 13.500h9.500M15.500 13.500H17" />, <><circle cx="3.500" cy="5" r="2.200" /><circle cx="13" cy="13.500" r="2.200" /></>],
    ["素材", <path d="M2.500 7v8.500H7M2.500 7C1 6 1 4.500 1.500 4L3 1.500h11L15.500 4c.8 1 0 3-1 3M5 6c0 2 3.500 2 3.500 0M10 16.500c-2-2-1.500-3.500-1-4.500 1.500.5 2 1.500 2.500 2.500 0-2 0-4 1.500-5.500 1.500 1.500 1 3.500.5 5.500 1-1.500 2-1.500 3.500-1.500 0 2.500-1.500 4-4 4z" />],
    ["智能特性", <path d="M5.500 14a7 7 0 1 1 7 0v3h-7zM9.500 4L6 9h2.500v4L12 8H9.500z" />],
    ["阅读", <path d="M1 2.500c3 0 6 .5 8 1.500v13c-2-1-5-1.500-8-1.500zM9 4c2-1 5-1.500 8-1.500V7M9 17c1-.5 2-.8 3-1M17 10v6" />, <circle cx="14" cy="12.500" r="2.500" />],
  ];
  return (
    <nav className="flex w-[41px] shrink-0 flex-col items-center gap-1 pl-[3px] pt-[11px]">
      <span className="h-[4px] w-5 border-y border-[#c5cad4]" />
      <div className="mt-[8px] flex flex-col gap-1">
        {items.map(([name, a, b]) => (
          <button
            key={name}
            aria-label={name}
            className={`flex size-8 items-center justify-center rounded-[2px] ${name === "智能特性" ? "bg-[#d9dde5]" : ""}`}
          >
            <Ic>{a}{b}</Ic>
          </button>
        ))}
      </div>
      <span className="mt-1 h-px w-full bg-[#e0e3e8]" />
      <button aria-label="图片工具" className="mt-1 flex size-8 items-center justify-center">
        <Ic><path d="M4 5V1.500h8V4M11 14v3H2V1.500h2M5 4.500h12v9H5zM5 11l3.500-3 3 4 2-1.500M6 16h2" /><circle cx="13.500" cy="7.500" r="1" /></Ic>
      </button>
      <div className="flex-1" />
      <span className="mb-3 h-px w-full bg-[#e0e3e8]" />
      <button aria-label="更多工具" className="mb-[9px]">
        <Ic s={18} box={18}><circle cx="3" cy="9" r="1.500" /><circle cx="9" cy="9" r="1.500" /><circle cx="15" cy="9" r="1.500" /></Ic>
      </button>
    </nav>
  );
}

function StatusBar() {
  const bar = <span className="h-4 w-px shrink-0 bg-[#d5d9e0]" />;
  return (
    <footer className="flex h-[26px] shrink-0 items-center border-t border-[#e0e3e8] bg-[#f5f7fa] pl-[10px] pr-[13px] pt-[3px] text-xs text-[#20283a]">
      <span className="mr-[6px] w-[56px] whitespace-nowrap">页面: 6/12</span>
      {bar}
      <span className="ml-[9px] mr-[7px] w-[76px] whitespace-nowrap">字数: 10/2841</span>
      <button className="flex h-full items-center gap-[3px] bg-[#e6effa] px-[3px]">
        <Ic s={16} box={16}><path d="M3.500 1.500H1v13h14v-13h-2.500M4 1.500c2 0 3 .5 4 1.500 1-1 2-1.500 4-1.500M5 8l2.500 2.500L11 6.500" /></Ic>
        拼写检查
      </button>
      <button aria-label="拼写检查选项" className="mx-[3px]"><Caret /></button>
      {bar}
      <button className="ml-[3px] flex items-center gap-[3px]">
        <Ic s={16} box={16}><path d="M4 1.500H1v13h5M4 1.500c2 0 3 .5 4 1.500 1-1 2-1.500 4-1.500h3V9" /><circle cx="9.500" cy="8.500" r="3.500" fill="#dfe2e8" /><path d="M12 11.500l3 3" /></Ic>
        内容检查
      </button>
      <button aria-label="内容检查选项" className="ml-1 mr-[5px]"><Caret /></button>
      {bar}
      <button className="ml-[18px] flex items-center gap-[3px]">
        <Ic s={16} box={16}><path d="M1 3.500v-2h9v2M5.500 1.500v12M4 13.500h3M10.500 9c0-3 4.500-3 4.500 0 0 1.500-2.200 2-2.200 3.500M12.800 14.800v.2" /></Ic>
        缺失字体
      </button>
      <div className="flex-1" />
      <button aria-label="护眼模式" className="mr-3">
        <Ic><path d="M1 10.500c4-6 12-6 16 0-4 6-12 6-16 0zM3 4l1 1.500M9 1.500v2M15 4l-1 1.500" /><circle cx="9" cy="10.500" r="2.800" /></Ic>
      </button>
      {bar}
      <div className="ml-[11px] mr-[9px] flex items-center gap-[2px]">
        <button aria-label="页面视图" className="flex h-[23px] w-6 items-center justify-center bg-[#d9dde5]"><Ic s={16} box={18}><path d="M2 1.500h11l3 3v12H2zM5 7h8M5 10h8M5 13h8" /></Ic></button>
        <button aria-label="大纲" className="flex w-6 justify-center"><Ic s={16} box={18}><path d="M2 3h1M5.500 3H17M5 7h1M8.500 7H17M5 11h1M8.500 11H17M2 15h1M5.500 15H17" /></Ic></button>
        <button aria-label="阅读版式" className="flex w-6 justify-center"><Ic s={16} box={18}><path d="M1 2.500h6l2 1.500 2-1.500h6v12.500h-6l-2 1.500-2-1.500H1zM9 4v12" /></Ic></button>
        <button aria-label="Web版式" className="flex w-6 justify-center"><Ic s={16} box={18}><circle cx="9" cy="9" r="7.800" /><ellipse cx="9" cy="9" rx="3.500" ry="7.800" /><path d="M1.500 6h15M1.500 12h15" /></Ic></button>
        <button aria-label="写作模式" className="flex w-6 justify-center"><Ic s={16} box={18}><path d="M13 1.500l3.500 2.500-7 9L5 15.500l.5-5zM9 6l4 3M1 16.500h13M5 12c-2 0-3 2-4 4.500" /></Ic></button>
      </div>
      {bar}
      <button aria-label="适合页宽" className="ml-[15px]">
        <Ic s={14} box={16}><path d="M1 4.500V1h3.500M11.500 1H15v3.500M15 11.500V15h-3.500M4.500 15H1v-3.500M4 4h8v8H4z" /></Ic>
      </button>
      <button className="ml-2 flex items-center gap-[6px] whitespace-nowrap">90% <Caret /></button>
      <button aria-label="缩小" className="ml-3"><Ic s={10} box={10} w={1.800}><path d="M0 5h10" /></Ic></button>
      <div className="relative ml-3 flex h-4 w-[148px] items-center">
        <span className="h-px w-[56px] bg-[#2f3a52]" />
        <span className="h-px flex-1 bg-[#d0d5de]" />
        <input
          type="range"
          aria-label="显示比例"
          defaultValue="41"
          className="absolute inset-0 m-0 w-full appearance-none bg-transparent [&::-webkit-slider-thumb]:size-3 [&::-webkit-slider-thumb]:appearance-none [&::-webkit-slider-thumb]:rounded-full [&::-webkit-slider-thumb]:border [&::-webkit-slider-thumb]:border-[#2f3a52] [&::-webkit-slider-thumb]:bg-[#f5f7fa]"
        />
      </div>
      <button aria-label="放大" className="ml-[2px]"><Ic s={10} box={10} w={1.800}><path d="M0 5h10M5 0v10" /></Ic></button>
      <button aria-label="全屏" className="ml-[14px]">
        <Ic s={14} box={14}><path d="M1 4.500V1h3.500M1 1l4 4M9.500 1H13v3.500M13 1L9 5M13 9.500V13H9.500M13 13L9 9M4.500 13H1V9.500M1 13l4-4" /></Ic>
      </button>
    </footer>
  );
}

function DialogField({ id, label }) {
  return (
    <div className="flex items-center">
      <label htmlFor={id} className="w-[75px] shrink-0 whitespace-nowrap">{label}</label>
      <div className="flex h-[23px] flex-1 items-center border border-[#767676] bg-white pr-1">
        <input id={id} className="h-full min-w-0 flex-1 px-1 outline-none" />
        <button aria-label={`${label}历史`}><Ic s={9} box={9} w={1.100} c="#555"><path d="M.5 2.500l4 4 4-4" /></Ic></button>
      </div>
    </div>
  );
}

function DButton({ className = "", disabled, children }) {
  return (
    <button
      disabled={disabled}
      className={`flex h-[30px] items-center justify-center whitespace-nowrap border ${
        disabled ? "border-[#bfbfbf] bg-[#cccccc] text-[#9b9b9b]" : "border-[#adadad] bg-[#e1e1e1] text-black"
      } ${className}`}
    >
      {children}
    </button>
  );
}

function DCaret() {
  return (
    <svg width="8" height="5" viewBox="0 0 8 5" className="shrink-0" aria-hidden="true">
      <path d="M0 0h8L4 5z" fill="#000" />
    </svg>
  );
}

function FindDialog() {
  const checks = ["区分大小写(H)", "区分前缀(X)", "全字匹配(Y)", "区分后缀(T)", "使用通配符(U)", "忽略标点符号(S)", "区分全/半角(M)", "忽略空格(A)"];
  return (
    <div
      role="dialog"
      aria-label="查找和替换"
      className="absolute right-[60px] top-[295px] z-30 w-[547px] border border-[#9b9b9b] bg-[#f0f0f0] text-xs text-black shadow-[2px_3px_12px_rgba(0,0,0,0.35)]"
    >
      <div className="flex h-[25px] items-center bg-white pl-[3px] pr-[10px]">
        <AppLogo kind="w" id="dlg-w" />
        <span className="ml-[5px] flex-1 text-[#8f8f8f]">查找和替换</span>
        <button aria-label="关闭对话框"><Cross s={11} c="#888" /></button>
      </div>
      <div className="pl-[7px] pr-[8px] pt-[7px]">
        <div className="flex h-[25px] items-end pl-px" role="tablist">
          <button role="tab" className="h-6 w-[63px] border border-b-0 border-[#dcdcdc]">查找(D)</button>
          <button role="tab" aria-selected="true" className="relative z-10 -mb-px h-[26px] w-[65px] border border-b-0 border-[#dcdcdc] bg-white">替换(P)</button>
          <button role="tab" className="h-6 w-[63px] border border-b-0 border-[#dcdcdc]">定位(G)</button>
        </div>
        <div className="h-[374px] border border-[#dcdcdc] bg-white px-[7px] pt-[6px]">
          <DialogField id="find-what" label="查找内容(N):" />
          <div className="mt-[7px] flex h-4">
            <span className="w-[75px]">选项:</span>
            <span>向下</span>
          </div>
          <div className="h-[29px]" />
          <DialogField id="replace-with" label="替换为(I):" />
          <div className="mt-[53px] flex gap-2 pl-px">
            <DButton className="w-[102px] gap-2">
              高级搜索(L)
              <span className="flex flex-col gap-[2px]"><Caret up c="#000" /><Caret up c="#000" /></span>
            </DButton>
            <DButton className="w-[77px] gap-[10px]">格式(O) <DCaret /></DButton>
            <DButton className="w-[83px] gap-[3px]">特殊格式(E) <DCaret /></DButton>
          </div>
          <div className="mt-[13px] flex items-center gap-[7px]">
            <label htmlFor="dir">搜索(C)</label>
            <div className="flex h-[23px] w-[51px] items-center border border-[#adadad] bg-[#e1e1e1] pl-[3px] pr-[5px]">
              <select id="dir" defaultValue="d" className="w-[28px] flex-1 appearance-none bg-transparent outline-none">
                <option value="d">向下</option>
              </select>
              <DCaret />
            </div>
          </div>
          <div className="mt-[6px] grid grid-cols-[260px_1fr]">
            {checks.map((c) => (
              <label key={c} className="flex h-6 items-center gap-[5px]">
                <input type="checkbox" className="size-[13px] appearance-none border border-[#333] bg-white" />
                {c}
              </label>
            ))}
          </div>
        </div>
        <div className="mt-2 flex gap-2 pl-px">
          <DButton disabled className="w-[77px]">替换(R)</DButton>
          <DButton disabled className="w-[77px]">全部替换(A)</DButton>
        </div>
        <div className="mb-[9px] mt-2 flex items-center gap-2">
          <a href="#tips" className="ml-1 mr-auto flex items-center gap-[6px] text-[#4a8ff0]">
            <Ic s={14} box={14} w={1} c="#555"><circle cx="7" cy="7" r="6.400" /><path d="M5.500 4.500L9 7l-3.500 2.500z" stroke="#4a8ff0" /></Ic>
            操作技巧
          </a>
          <DButton disabled className="w-[84px]">查找上一处(B)</DButton>
          <DButton disabled className="w-[82px]">查找下一处(F)</DButton>
          <DButton className="w-[77px]">关闭</DButton>
        </div>
      </div>
    </div>
  );
}

function Annotations() {
  const arrows = [
    [361, 259, 282, 73],
    [1035, 193, 1120, 115],
    [1054, 218, 1141, 184],
  ];
  return (
    <svg width="1610" height="270" viewBox="0 0 1610 270" className="pointer-events-none absolute left-0 top-0 z-40 drop-shadow-[3px_3px_2px_rgba(0,0,0,0.5)]" aria-hidden="true">
      {arrows.map(([x1, y1, x2, y2]) => {
        const deg = (Math.atan2(y2 - y1, x2 - x1) * 180) / Math.PI;
        const len = Math.hypot(x2 - x1, y2 - y1);
        return (
          <g key={x1} transform={`translate(${x2} ${y2}) rotate(${deg})`} fill="#fb0505">
            <path d={`M${-len} 0H-18`} stroke="#fb0505" strokeWidth="3" strokeLinecap="round" />
            <path d="M0 0L-27 8L-23 0L-27 -8z" />
          </g>
        );
      })}
      <path d="M1196 174v16l3.500-3 3 6 2.500-1.200-2.700-5.800h4.700z" fill="#fff" stroke="#222" strokeWidth="1" />
    </svg>
  );
}

function Watermark() {
  return (
    <div className="pointer-events-none absolute bottom-[6px] right-[11px] z-40 flex items-center opacity-85">
      <svg width="44" height="42" viewBox="0 0 44 42" aria-hidden="true">
        <defs>
          <linearGradient id="wmA" x1="0" y1="1" x2="1" y2="0">
            <stop offset="0" stopColor="#2f6fc0" />
            <stop offset="1" stopColor="#4cc3f2" />
          </linearGradient>
          <linearGradient id="wmB" x1="0" y1="1" x2="1" y2="0">
            <stop offset="0" stopColor="#e6e23a" />
            <stop offset="1" stopColor="#37b86a" />
          </linearGradient>
        </defs>
        <path d="M42 1C22 0 1 11 1 26c0 5 4 7 8 6 8-1 8-10 16-13 4-1.500 8-1 12 0-3-6-12-6-18-2-5 3.500-6 9-9 9-4 0-2-7 3-12C20 8 30 3 42 1z" fill="url(#wmA)" />
        <path d="M22 17c7-3 17-4 20 1 4 9-9 22-38 22 14-2 24-7 27-14 2-6-3-8-9-9z" fill="url(#wmB)" />
      </svg>
      <div className="flex flex-col font-bold leading-6">
        <span className="text-[21px] text-[#5b9bda]">极光下载站</span>
        <span className="font-['Liberation_Sans'] text-[17px] leading-[22px] text-[#4cc274] [font-weight:500]">www.xz7.com</span>
      </div>
    </div>
  );
}

export default function App() {
  return (
    <div className="relative flex h-screen overflow-hidden bg-[#f5f7fa] font-['Open_Sans','Noto_Sans_CJK_SC',sans-serif]">
      <div className="w-[7px] shrink-0 bg-linear-to-r from-[#f4f4f4] to-[#bdbdbd]" />
      <div className="flex min-w-0 flex-1 flex-col">
        <TitleBar />
        <MenuRow />
        <Ribbon />
        <div className="flex min-h-0 flex-1">
          <NavRail />
          <Toc />
          <VerticalRuler />
          <main className="flex min-w-0 flex-1 justify-center overflow-hidden pl-[9px]">
            <div className="flex w-[714px] shrink-0 flex-col">
              <HorizontalRuler />
              <Page />
            </div>
          </main>
          <ScrollBar />
          <SmartPanel />
          <ToolRail />
        </div>
        <StatusBar />
      </div>
      <FindDialog />
      <Annotations />
      <Watermark />
    </div>
  );
}
